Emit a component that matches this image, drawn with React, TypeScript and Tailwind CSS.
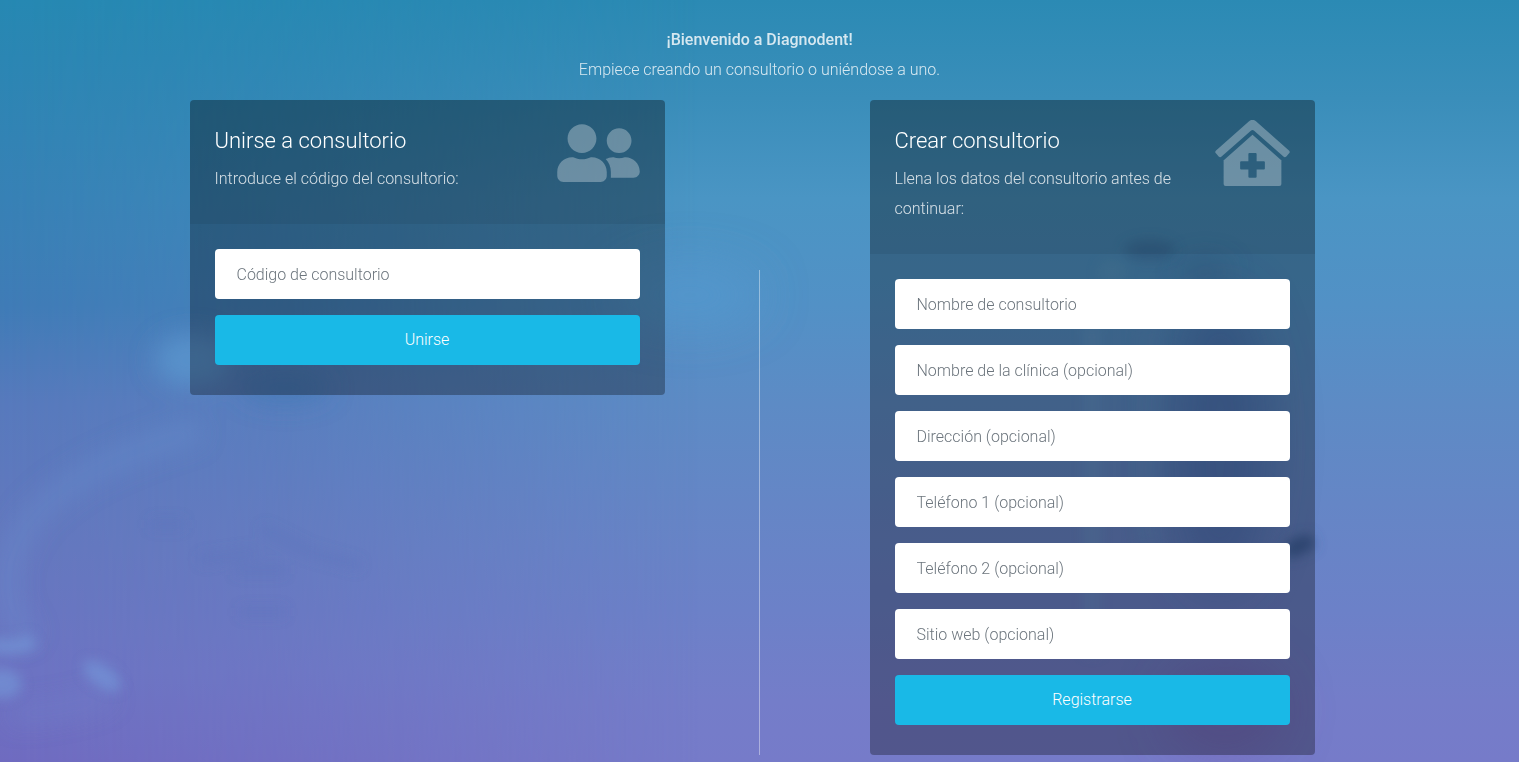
import type { ReactNode } from "react";
import { FaClinicMedical, FaUserFriends } from "react-icons/fa";

const clinicFields = [
  "Nombre de consultorio",
  "Nombre de la clínica (opcional)",
  "Dirección (opcional)",
  "Teléfono 1 (opcional)",
  "Teléfono 2 (opcional)",
  "Sitio web (opcional)",
];

function Backdrop() {
  return (
    <svg
      aria-hidden="true"
      className="absolute inset-0 -z-10 h-full w-full"
      viewBox="0 0 1519 762"
      preserveAspectRatio="none"
    >
      <defs>
        <linearGradient id="sky" x1="0" y1="0" x2="0" y2="1">
          <stop offset="0" stopColor="#2b8ab4" />
          <stop offset="0.13" stopColor="#3a8eba" />
          <stop offset="0.26" stopColor="#4a95c4" />
          <stop offset="0.4" stopColor="#5291c6" />
          <stop offset="0.53" stopColor="#5d8bc5" />
          <stop offset="0.66" stopColor="#6586c6" />
          <stop offset="0.8" stopColor="#6c81c8" />
          <stop offset="0.92" stopColor="#747dc9" />
          <stop offset="1" stopColor="#767bc9" />
        </linearGradient>
        <linearGradient id="shore" x1="0" y1="0" x2="0" y2="1">
          <stop offset="0" stopColor="#2688b2" />
          <stop offset="0.26" stopColor="#3781b5" />
          <stop offset="0.4" stopColor="#3f7bb6" />
          <stop offset="0.53" stopColor="#5779bc" />
          <stop offset="0.72" stopColor="#6477be" />
          <stop offset="0.88" stopColor="#6c73c2" />
          <stop offset="1" stopColor="#6f6bc0" />
        </linearGradient>
        <linearGradient id="fade" x1="0" y1="0" x2="1" y2="0">
          <stop offset="0" stopColor="#fff" />
          <stop offset="0.18" stopColor="#fff" stopOpacity="0.7" />
          <stop offset="0.46" stopColor="#fff" stopOpacity="0" />
        </linearGradient>
        <mask id="west">
          <rect width="1519" height="762" fill="url(#fade)" />
        </mask>
        <filter id="fine" x="-50%" y="-50%" width="200%" height="200%">
          <feGaussianBlur stdDeviation="6" />
        </filter>
        <filter id="soft" x="-50%" y="-50%" width="200%" height="200%">
          <feGaussianBlur stdDeviation="12" />
        </filter>
        <filter id="wide" x="-80%" y="-80%" width="260%" height="260%">
          <feGaussianBlur stdDeviation="24" />
        </filter>
      </defs>
      <rect width="1519" height="762" fill="url(#sky)" />
      <rect width="1519" height="762" fill="url(#shore)" mask="url(#west)" />
      <g filter="url(#wide)">
        <ellipse cx="690" cy="295" rx="70" ry="30" fill="#559bd0" opacity="0.6" />
        <ellipse cx="1220" cy="440" rx="50" ry="150" fill="#4367ab" opacity="0.55" />
        <ellipse cx="1225" cy="710" rx="60" ry="50" fill="#755eb2" opacity="0.45" />
      </g>
      <g filter="url(#soft)">
        <ellipse cx="285" cy="388" rx="45" ry="16" fill="#3f78b6" opacity="0.6" />
        <ellipse cx="192" cy="360" rx="38" ry="26" fill="#5c98d0" opacity="0.7" />
        <ellipse cx="1205" cy="272" rx="25" ry="14" fill="#4279ae" opacity="0.5" />
        <path
          d="M200 430Q60 470 24 530T30 640"
          fill="none"
          stroke="#6b93d0"
          strokeWidth="22"
          opacity="0.35"
        />
        <path
          d="M10 715Q70 712 110 695"
          fill="none"
          stroke="#7486cd"
          strokeWidth="18"
          opacity="0.35"
        />
      </g>
      <g filter="url(#fine)">
        <ellipse cx="1150" cy="250" rx="26" ry="10" fill="#3d73a6" opacity="0.6" />
        <ellipse cx="1112" cy="272" rx="14" ry="12" fill="#5f9fc8" opacity="0.4" />
        <rect x="1084" y="325" width="16" height="330" fill="#6ba0ce" opacity="0.35" />
        <rect x="1134" y="325" width="28" height="220" fill="#5f93c8" opacity="0.3" />
        <path d="M1290 540l20-6 6 12-22 12-12-4z" fill="#41629f" />
        <path d="M-10 645Q20 650 34 640" fill="none" stroke="#749ddb" strokeWidth="16" opacity="0.55" />
        <ellipse cx="2" cy="684" rx="20" ry="15" fill="#749ddb" opacity="0.55" />
        <ellipse
          cx="102"
          cy="676"
          rx="22"
          ry="11"
          transform="rotate(35 102 676)"
          fill="#7499db"
          opacity="0.6"
        />
        <path
          d="M262 528L310 552L360 566M150 524h34M200 560l56-8M235 570h50M240 612h45"
          fill="none"
          stroke="#5973ba"
          strokeWidth="10"
          opacity="0.35"
        />
      </g>
    </svg>
  );
}

type PanelProps = {
  title: string;
  description: string;
  icon: ReactNode;
  children: ReactNode;
};

function Panel({ title, description, icon, children }: PanelProps) {
  return (
    <section className="overflow-hidden rounded">
      <header className="flex bg-black/35 px-[25px] pb-[30px]">
        <div className="w-3/4 pt-[25px]">
          <h2 className="text-[22px] leading-[32px] text-white">{title}</h2>
          <p className="mt-[7px] leading-[30px] text-white/80">{description}</p>
        </div>
        <div className="flex w-1/4 justify-end pt-5 text-white/30">{icon}</div>
      </header>
      <form
        className="flex flex-col gap-4 bg-black/30 px-[25px] pt-[25px] pb-[30px]"
        onSubmit={(event) => event.preventDefault()}
      >
        {children}
      </form>
    </section>
  );
}

function Field({ label }: { label: string }) {
  return (
    <input
      type="text"
      aria-label={label}
      placeholder={label}
      className="h-[50px] w-full rounded bg-white px-[22px] text-[#495057] placeholder:text-[#6c757d] placeholder:opacity-100"
    />
  );
}

function SubmitButton({ children }: { children: ReactNode }) {
  return (
    <button type="submit" className="h-[50px] w-full rounded bg-[#19b9e7] leading-[50px] text-white">
      {children}
    </button>
  );
}

export default function App() {
  return (
    <main className="relative isolate overflow-hidden pt-[25px] pb-[7px] font-['Roboto',sans-serif] text-base font-light">
      <Backdrop />
      <div className="mx-auto max-w-[1140px]">
        <div className="mb-[15px] text-center leading-[30px] text-white/80">
          <h1 className="font-medium">¡Bienvenido a Diagnodent!</h1>
          <p>Empiece creando un consultorio o uniéndose a uno.</p>
        </div>
        <div className="grid grid-cols-12">
          <div className="col-span-5">
            <Panel
              title="Unirse a consultorio"
              description="Introduce el código del consultorio:"
              icon={<FaUserFriends className="h-[66px] w-[83px] shrink-0" />}
            >
              <Field label="Código de consultorio" />
              <SubmitButton>Unirse</SubmitButton>
            </Panel>
          </div>
          <div className="col-span-2 flex justify-center pt-[170px]">
            <div className="w-px bg-white/40" />
          </div>
          <div className="col-span-5 px-[15px]">
            <Panel
              title="Crear consultorio"
              description="Llena los datos del consultorio antes de continuar:"
              icon={<FaClinicMedical className="h-[66px] w-[75px] shrink-0" />}
            >
              {clinicFields.map((label) => (
                <Field key={label} label={label} />
              ))}
              <SubmitButton>Registrarse</SubmitButton>
            </Panel>
          </div>
        </div>
      </div>
    </main>
  );
}
